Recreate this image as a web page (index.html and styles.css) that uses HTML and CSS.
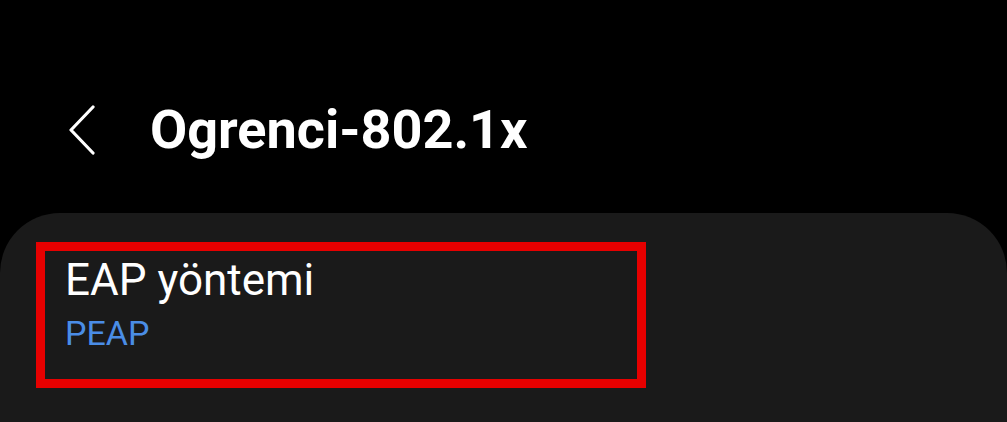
FILE: index.html
```html
<!DOCTYPE html>
<html lang="tr">
<head>
<meta charset="utf-8">
<link rel="stylesheet" href="styles.css">
</head>
<body>
<div class="screen">
  <header class="appbar">
    <span class="back">
      <svg width="30" height="50" viewBox="0 0 30 50"><path d="M25 2 L3 25 L25 48" fill="none" stroke="#fff" stroke-width="3.2" stroke-linecap="round" stroke-linejoin="round"/></svg>
    </span>
    <h1 class="title">Ogrenci-802.1x</h1>
  </header>
  <section class="card">
    <div class="item">
      <div class="label">EAP yöntemi</div>
      <div class="value">PEAP</div>
    </div>
  </section>
</div>
</body>
</html>
```
FILE: styles.css
```css
html, body {
  margin: 0;
  padding: 0;
  background: #000;
}
.screen {
  width: 1007px;
  height: 422px;
  overflow: hidden;
  background: #000;
  font-family: Roboto, "Noto Sans", sans-serif;
  color: #fff;
}
.appbar {
  display: flex;
  align-items: center;
  height: 213px;
  padding-left: 68px;
  padding-top: 46px;
  box-sizing: border-box;
}
.back {
  display: flex;
  width: 30px;
  height: 50px;
  margin-right: 52px;
}
.title {
  margin: 0;
  font-size: 54px;
  font-weight: 700;
  letter-spacing: 0;
  line-height: 1;
}
.card {
  background: #1a1a1a;
  border-radius: 60px 60px 0 0;
  height: 209px;
  padding: 29px 0 0 36px;
  box-sizing: border-box;
}
.item {
  width: 610px;
  height: 146px;
  border: 9px solid #e60000;
  box-sizing: border-box;
  padding: 4px 0 0 20px;
}
.label {
  font-size: 44px;
  line-height: 50px;
  color: #fff;
}
.value {
  font-size: 34px;
  line-height: 56px;
  color: #4a8de6;
}
```
